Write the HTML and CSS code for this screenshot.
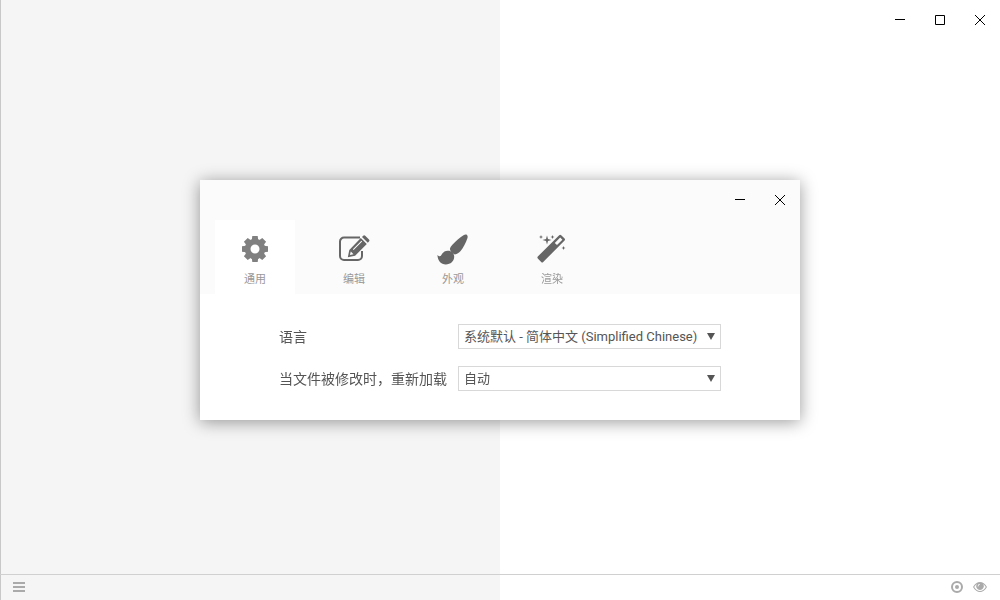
FILE: index.html
```
<!DOCTYPE html>
<html lang="zh-CN">
<head>
    <meta charset="UTF-8">
    <meta name="viewport" content="width=device-width, initial-scale=1.0">
    <title>设置</title>
    <link rel="stylesheet" href="styles.css">
</head>
<body>

    <!-- Editor and preview panes -->
    <main class="panes">
        <section class="editor"></section>
        <section class="preview">
            <div class="window-controls">
                <button type="button" aria-label="最小化"><svg width="12" height="12" viewBox="0 0 12 12"><path d="M1 5.5h10"/></svg></button>
                <button type="button" aria-label="最大化"><svg width="12" height="12" viewBox="0 0 12 12"><path d="M1.5 1.5h9v9h-9z"/></svg></button>
                <button type="button" aria-label="关闭"><svg width="12" height="12" viewBox="0 0 12 12"><path d="M1 1l10 10M11 1L1 11"/></svg></button>
            </div>
        </section>
    </main>

    <!-- Status bar -->
    <footer class="statusbar">
        <div class="status-left">
            <button type="button" aria-label="菜单">
                <svg width="12" height="12" viewBox="0 0 12 12"><path d="M0 1h12v2H0zM0 5h12v2H0zM0 9h12v2H0z"/></svg>
            </button>
        </div>
        <div class="status-right">
            <button type="button" aria-label="同步">
                <svg width="14" height="14" viewBox="0 0 14 14"><circle class="ring" cx="7" cy="7" r="5"/><circle cx="7" cy="7" r="2"/></svg>
            </button>
            <button type="button" aria-label="预览">
                <svg width="14" height="14" viewBox="0 0 14 14"><path fill-rule="evenodd" d="M0 7C2 3.700 4.400 2 7 2s5 1.700 7 5c-2 3.300-4.400 5-7 5S2 10.300 0 7zM1.200 7C2.800 9.600 4.700 11 7 11s4.200-1.400 5.800-4c-.8-1.300-1.700-2.300-2.800-3a3.700 3.700 0 1 1-6 0C2.900 4.700 2 5.700 1.200 7zM7 4a2.400 2.400 0 0 0-2.400 2.400h.8C5.400 5.500 6.100 4.800 7 4.800z"/></svg>
            </button>
        </div>
    </footer>

    <!-- Preferences dialog -->
    <div class="overlay">
        <div class="dialog" role="dialog" aria-label="设置">
            <header class="dialog-header">
                <div class="window-controls">
                    <button type="button" aria-label="最小化"><svg width="12" height="12" viewBox="0 0 12 12"><path d="M1 5.500h10"/></svg></button>
                    <button type="button" aria-label="关闭"><svg width="12" height="12" viewBox="0 0 12 12"><path d="M1 1l10 10M11 1L1 11"/></svg></button>
                </div>
                <nav class="tabs">
                    <button type="button" class="tab active">
                        <svg width="32" height="32" viewBox="0 0 32 32">
                            <circle cx="16" cy="16" r="7.400" fill="none" stroke="currentColor" stroke-width="5.800"/>
                            <g id="teeth">
                                <path d="M12.800 7l.5-4h5.400l.5 4zM12.800 25l.5 4h5.400l.5-4z"/>
                                <path d="M7 12.800l-4 .5v5.400l4 .5zM25 12.800l4 .5v5.400l-4 .5z"/>
                            </g>
                            <use href="#teeth" transform="rotate(45 16 16)"/>
                        </svg>
                        <span>通用</span>
                    </button>
                    <button type="button" class="tab">
                        <svg width="32" height="32" viewBox="1 0 32 32">
                            <path d="M23 4.500H7a4 4 0 0 0-4 4v14.500a4 4 0 0 0 4 4h14a4 4 0 0 0 4-4v-5" fill="none" stroke="currentColor" stroke-width="2"/>
                            <path fill-rule="evenodd" d="M23.800 5l6 6L18.100 22.700l-7.300 1.500 1.500-7.300zM13.800 18.500l-.9 3.600 3.600-.9zM15.900 16.200l.7.700 8.500-8.500-.7-.7z"/>
                            <path d="M25 4l1.200-1.200q1-1 2 0l3.800 3.800q1 1 0 2L30.800 9.800z"/>
                        </svg>
                        <span>编辑</span>
                    </button>
                    <button type="button" class="tab">
                        <svg width="32" height="32" viewBox="1 0 32 32">
                            <path d="M30.800 1.800c.9.700 1.100 2 .6 3.400-1.600 4.600-3.900 9.200-6.800 12.900-1.600 2-3.500 3.200-5.700 3.300-2.700-.7-4.700-2.700-5-5.300.2-1.600 1.200-3 2.700-4.600 3.300-3.500 6.900-6.700 10.900-9.300 1.200-.8 2.500-1 3.300-.4z"/>
                            <path d="M11.700 17.800c3.500-.2 6.400 2.400 6.500 5.700.1 4.700-3.700 7.900-8.400 7.900-4.800 0-8-3.700-8.400-9.500 1 1 2.200 1.700 3.100 1.200 1.200-.6 1.900-5 7.200-5.300z"/>
                        </svg>
                        <span>外观</span>
                    </button>
                    <button type="button" class="tab">
                        <svg width="32" height="32" viewBox="1 0 32 32">
                            <path fill-rule="evenodd" d="M24.200 2.200q1-1 2 0l3.400 3.400q1 1 0 2L8.200 29q-1 1-2 0l-3.400-3.400q-1-1 0-2zM25.200 4.500l-5.400 5.400 2.200 2.200 5.400-5.400z"/>
                            <path d="M12 2.500l1 3.500 3.500 1-3.500 1-1 3.500-1-3.500-3.500-1L11 6z"/>
                            <path d="M6 2l.6 1.400 1.400.6-1.400.6L6 6l-.6-1.400L4 4l1.400-.6zM17.500 2l.6 1.400 1.400.6-1.400.6-.6 1.400-.6-1.400-1.400-.6 1.400-.6zM28.500 13l.6 1.400 1.400.6-1.400.6-.6 1.400-.6-1.400-1.400-.6 1.400-.6z"/>
                        </svg>
                        <span>渲染</span>
                    </button>
                </nav>
            </header>

            <form class="settings">
                <label for="language">语言</label>
                <div class="select">
                    <select id="language">
                        <option>系统默认 - 简体中文 (Simplified Chinese)</option>
                    </select>
                </div>
                <label for="reload">当文件被修改时，重新加载</label>
                <div class="select">
                    <select id="reload">
                        <option>自动</option>
                    </select>
                </div>
            </form>
        </div>
    </div>

</body>
</html>
```
FILE: styles.css
```
* {
    margin: 0;
    padding: 0;
    box-sizing: border-box;
}
body {
    font-family: Roboto, "Noto Sans CJK SC", sans-serif;
    display: flex;
    flex-direction: column;
    height: 100vh;
    background: #fff;
    color: #555;
}
button {
    border: none;
    background: none;
    color: inherit;
    cursor: pointer;
}
svg {
    display: block;
    fill: currentColor;
}
/* Panes */
.panes {
    flex: 1;
    display: flex;
}
.editor {
    flex: 1;
    background: #f5f5f5;
    box-shadow: inset 1px 0 #c8c8c8;
}
.preview {
    flex: 1;
}
/* Minimize, maximize and close */
.window-controls {
    display: flex;
    justify-content: flex-end;
}
.window-controls button {
    width: 40px;
    height: 40px;
    display: flex;
    align-items: center;
    justify-content: center;
    color: #000;
}
.window-controls svg {
    fill: none;
    stroke: currentColor;
}
/* Status bar */
.statusbar {
    display: flex;
    height: 26px;
    border-top: 1px solid #d0d0d0;
    color: #aaa;
}
.status-left,
.status-right {
    flex: 1;
    display: flex;
    align-items: center;
    padding: 0 13px 1px;
}
.status-left {
    background: #f5f5f5;
    box-shadow: inset 1px 0 #c8c8c8;
}
.status-right {
    justify-content: flex-end;
    gap: 9px;
}
.ring {
    fill: none;
    stroke: currentColor;
    stroke-width: 2;
}
/* Dialog */
.overlay {
    position: fixed;
    inset: 0;
    display: flex;
    align-items: center;
    justify-content: center;
}
.dialog {
    width: 600px;
    max-width: 100%;
    background: #fff;
    box-shadow: 0 2px 16px rgba(0, 0, 0, 0.4);
}
.dialog-header {
    background: #fbfbfb;
}
.tabs {
    display: flex;
    gap: 19px;
    padding: 0 15px;
}
.tab {
    width: 80px;
    padding: 13px 0 8px;
    display: flex;
    flex-direction: column;
    align-items: center;
    gap: 5px;
    font-family: "Noto Sans CJK SC", sans-serif;
    font-size: 11px;
    line-height: 16px;
    color: #666;
}
.tab span {
    color: #999;
}
.tab.active {
    background: #fff;
    color: #808080;
}
/* Settings form */
.settings {
    display: grid;
    grid-template-columns: auto 1fr;
    align-items: center;
    column-gap: 11px;
    row-gap: 17px;
    padding: 30px 79px 29px;
    font-size: 14px;
}
.settings label {
    line-height: 20px;
    white-space: nowrap;
}
.select {
    position: relative;
}
.select select {
    display: block;
    width: 100%;
    height: 25px;
    padding: 0 18px 0 5px;
    appearance: none;
    border: 1px solid #d8d8d8;
    border-radius: 0;
    background: #fff;
    font-family: Roboto, "Noto Sans CJK SC", sans-serif;
    font-size: 13px;
    color: #555;
}
/* Drop-down arrow */
.select::after {
    content: "";
    position: absolute;
    top: 9px;
    right: 6px;
    border: 4px solid transparent;
    border-top: 7px solid #555;
    border-bottom: none;
    pointer-events: none;
}
```
